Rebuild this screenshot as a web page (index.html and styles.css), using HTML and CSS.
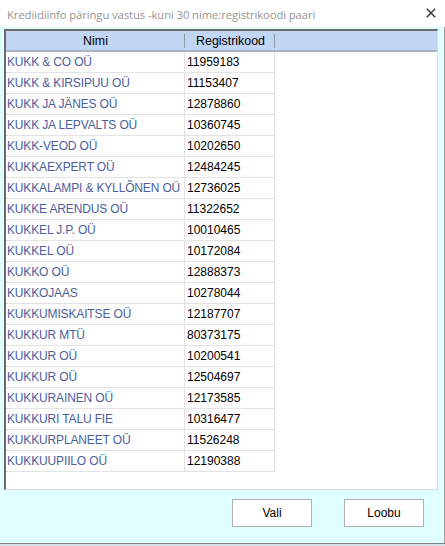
FILE: index.html
```html
<!DOCTYPE html>
<html>
<head>
<meta charset="utf-8">
<link rel="stylesheet" href="styles.css">
</head>
<body>
<div class="window">
  <div class="titlebar">
    <span class="title">Krediidiinfo päringu vastus -kuni 30 nime:registrikoodi paari</span>
    <svg class="close" width="10" height="10" viewBox="0 0 10 10"><path d="M0.8 0.8 L9.2 9.2 M9.2 0.8 L0.8 9.2" stroke="#3a3a3a" stroke-width="1.5" fill="none"/></svg>
  </div>
  <div class="body">
    <div class="grid">
      <div class="row head">
        <div class="c1">Nimi</div>
        <div class="c2">Registrikood</div>
        <div class="rest"></div>
      </div>
      <div class="row"><div class="c1">KUKK &amp; CO OÜ</div><div class="c2">11959183</div></div>
      <div class="row"><div class="c1">KUKK &amp; KIRSIPUU OÜ</div><div class="c2">11153407</div></div>
      <div class="row"><div class="c1">KUKK JA JÄNES OÜ</div><div class="c2">12878860</div></div>
      <div class="row"><div class="c1">KUKK JA LEPVALTS OÜ</div><div class="c2">10360745</div></div>
      <div class="row"><div class="c1">KUKK-VEOD OÜ</div><div class="c2">10202650</div></div>
      <div class="row"><div class="c1">KUKKAEXPERT OÜ</div><div class="c2">12484245</div></div>
      <div class="row"><div class="c1">KUKKALAMPI &amp; KYLLÕNEN OÜ</div><div class="c2">12736025</div></div>
      <div class="row"><div class="c1">KUKKE ARENDUS OÜ</div><div class="c2">11322652</div></div>
      <div class="row"><div class="c1">KUKKEL J.P. OÜ</div><div class="c2">10010465</div></div>
      <div class="row"><div class="c1">KUKKEL OÜ</div><div class="c2">10172084</div></div>
      <div class="row"><div class="c1">KUKKO OÜ</div><div class="c2">12888373</div></div>
      <div class="row"><div class="c1">KUKKOJAAS</div><div class="c2">10278044</div></div>
      <div class="row"><div class="c1">KUKKUMISKAITSE OÜ</div><div class="c2">12187707</div></div>
      <div class="row"><div class="c1">KUKKUR MTÜ</div><div class="c2">80373175</div></div>
      <div class="row"><div class="c1">KUKKUR OÜ</div><div class="c2">10200541</div></div>
      <div class="row"><div class="c1">KUKKUR OÜ</div><div class="c2">12504697</div></div>
      <div class="row"><div class="c1">KUKKURAINEN OÜ</div><div class="c2">12173585</div></div>
      <div class="row"><div class="c1">KUKKURI TALU FIE</div><div class="c2">10316477</div></div>
      <div class="row"><div class="c1">KUKKURPLANEET OÜ</div><div class="c2">11526248</div></div>
      <div class="row"><div class="c1">KUKKUUPIILO OÜ</div><div class="c2">12190388</div></div>
    </div>
    <div class="buttons">
      <button class="btn">Vali</button>
      <button class="btn">Loobu</button>
    </div>
  </div>
  <div class="taskbar"></div>
</div>
</body>
</html>
```
FILE: styles.css
```css
html, body {
  margin: 0;
  padding: 0;
  background: #ffffff;
}
.window {
  width: 445px;
  height: 546px;
  display: flex;
  flex-direction: column;
  font-family: "Liberation Sans", Arial, sans-serif;
}
.titlebar {
  height: 27px;
  flex: none;
  background: #ffffff;
  display: flex;
  align-items: center;
  justify-content: space-between;
  padding: 0 9px 0 7px;
  box-sizing: border-box;
}
.title {
  font-family: "Open Sans", "Noto Sans", sans-serif;
  font-size: 11.3px;
  color: #959595;
  margin-top: 2px;
  letter-spacing: -0.1px;
}
.close {
  margin-top: -2px;
  flex: none;
}
.body {
  flex: 1;
  background: #e0ffff;
  padding: 2px 6px 0 4px;
  display: flex;
  flex-direction: column;
  border-right: 1px solid #a0a0a0;
  border-bottom: 1px solid #808080;
}
.grid {
  height: 461px;
  box-sizing: border-box;
  background: #fefefe;
  border-top: 2px solid #6b6b6b;
  border-left: 2px solid #6b6b6b;
  border-right: 1px solid #dcdcdc;
  border-bottom: 1px solid #dcdcdc;
  font-size: 12px;
}
.row {
  display: flex;
  height: 21px;
  box-sizing: border-box;
}
.row .c1, .row .c2 {
  border-right: 1px solid #e3e3e3;
  border-bottom: 1px solid #e3e3e3;
  box-sizing: border-box;
  display: flex;
  align-items: center;
  white-space: nowrap;
  overflow: hidden;
}
.c1 {
  width: 179px;
  padding-left: 1px;
  color: #4c5f9c;
  letter-spacing: -0.15px;
}
.c2 {
  width: 90px;
  padding-left: 2px;
  color: #000000;
}
.row.head {
  background: #c1d6f2;
  border-bottom: 2px solid #a9b3bf;
  height: 21px;
}
.row.head .c1, .row.head .c2 {
  justify-content: center;
  color: #000000;
  font-size: 12.4px;
  letter-spacing: 0;
  border-bottom: none;
  border-right: none;
  position: relative;
  padding-left: 0;
}
.row.head .c1 {
  width: 179px;
}
.row.head .c2 {
  width: 90px;
  padding-left: 1px;
}
.row.head .c1::after, .row.head .c2::after {
  content: "";
  position: absolute;
  right: 0;
  top: 3px;
  bottom: 2px;
  width: 1px;
  background: #8e9aa6;
}
.row.head .rest {
  flex: 1;
}
.buttons {
  display: flex;
  justify-content: flex-end;
  gap: 32px;
  padding: 9px 14px 0 0;
}
.btn {
  width: 80px;
  height: 28px;
  background: #ffffff;
  border: 1px solid #adadad;
  font-family: "Liberation Sans", Arial, sans-serif;
  font-size: 12px;
  color: #000000;
  padding: 0;
  margin: 0;
}
.taskbar {
  height: 2px;
  flex: none;
  background: #d8dee6;
}
```
